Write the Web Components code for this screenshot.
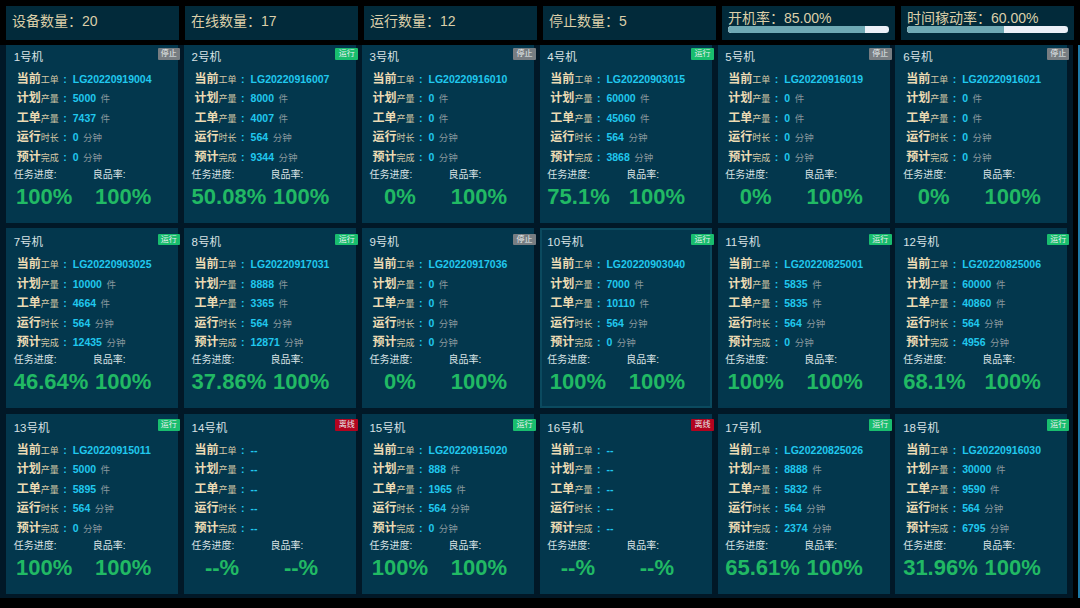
<!DOCTYPE html>
<html lang="zh">
<head>
<meta charset="utf-8">
<style>
  html, body { margin: 0; height: 100%; background: #000; overflow: hidden; }
  body { font-family: "Liberation Sans", "Noto Sans CJK SC", sans-serif; }
</style>
</head>
<body>
<machine-board></machine-board>
<script>
const STATE = { run: ["运行", "#19bd6e"], stop: ["停止", "#777d82"], off: ["离线", "#b3041f"] };

const MACHINES = [
  ["1号机","stop","LG20220919004","5000","7437","0","0","100%"],
  ["2号机","run","LG20220916007","8000","4007","564","9344","50.08%"],
  ["3号机","stop","LG20220916010","0","0","0","0","0%"],
  ["4号机","run","LG20220903015","60000","45060","564","3868","75.1%"],
  ["5号机","stop","LG20220916019","0","0","0","0","0%"],
  ["6号机","stop","LG20220916021","0","0","0","0","0%"],
  ["7号机","run","LG20220903025","10000","4664","564","12435","46.64%"],
  ["8号机","run","LG20220917031","8888","3365","564","12871","37.86%"],
  ["9号机","stop","LG20220917036","0","0","0","0","0%"],
  ["10号机","run","LG20220903040","7000","10110","564","0","100%"],
  ["11号机","run","LG20220825001","5835","5835","564","0","100%"],
  ["12号机","run","LG20220825006","60000","40860","564","4956","68.1%"],
  ["13号机","run","LG20220915011","5000","5895","564","0","100%"],
  ["14号机","off","--","--","--","--","--","--%"],
  ["15号机","run","LG20220915020","888","1965","564","0","100%"],
  ["16号机","off","--","--","--","--","--","--%"],
  ["17号机","run","LG20220825026","8888","5832","564","2374","65.61%"],
  ["18号机","run","LG20220916030","30000","9590","564","6795","31.96%"]
];

class StatBox extends HTMLElement {
  connectedCallback() {
    const pct = this.getAttribute("att-bar");
    this.attachShadow({ mode: "open" }).innerHTML = `
      <style>
        :host { display: flex; flex-direction: column; box-sizing: border-box; height: 34px;
          background: #022a3a; color: #dccfa9; padding: ${pct ? 4 : 7}px 6px 0; font-size: 14px; }
        .t { line-height: 16px; white-space: pre; }
        .track { height: 6.5px; border-radius: 3.25px; background: #ecf0f7; overflow: hidden; }
        .fill { height: 100%; background: #6fa9b4; border-radius: 3.25px 0 0 3.25px; }
      </style>
      <div class="t"><slot></slot></div>
      ${pct ? `<div class="track"><div class="fill" style="width:${pct}%"></div></div>` : ""}`;
  }
}

class InfoRow extends HTMLElement {
  connectedCallback() {
    const val = this.getAttribute("att-val");
    const unit = this.getAttribute("att-unit") || "";
    this.attachShadow({ mode: "open" }).innerHTML = `
      <style>
        :host { display: flex; align-items: baseline; height: 19.5px; line-height: 19.5px; white-space: nowrap; }
        .a { font-size: 12px; font-weight: bold; color: #ecdbb4; }
        .b { font-size: 9px; color: #d5c8a6; }
        .c { font-size: 10.5px; font-weight: bold; color: #20c8ee; margin: 0 6px 0 4.5px; }
        .v { font-size: 10.5px; font-weight: bold; color: #20c8ee; }
        .u { font-size: 9.5px; color: #8a979d; margin-left: 4.5px; }
      </style>
      <span class="a">${this.getAttribute("att-a")}</span><span class="b">${this.getAttribute("att-b")}</span><span class="c">:</span><span class="v">${val}</span>${unit && val !== "--" ? `<span class="u">${unit}</span>` : ""}`;
  }
}

class MachineCard extends HTMLElement {
  connectedCallback() {
    const [name, st, order, plan, done, time, left, pct] = this.data;
    const [label, color] = STATE[st];
    this.attachShadow({ mode: "open" }).innerHTML = `
      <style>
        :host { display: flex; flex-direction: column; justify-content: flex-end; position: relative; box-sizing: border-box;
          background: #03374d; padding: 0 0 10.7px 7.7px; color: #d9e2e4; min-width: 0; }
        :host([att-active]) { outline: 2px solid #0b4a5f; outline-offset: -2px; }
        .name { font-size: 11.5px; line-height: 14px; margin-bottom: 5.7px; }
        .tag { position: absolute; bottom: 163px; right: -2px; width: 22.5px; height: 11.3px; line-height: 11.3px; font-size: 8px;
          text-align: center; color: #e8eeee; background: ${color}; border-radius: 1px; }
        .rows { padding-left: 3px; }
        .heads, .nums { display: grid; grid-template-columns: 79px 1fr; }
        .heads { font-size: 10px; line-height: 12px; margin-top: 1.7px; }
        .nums { font-size: 22px; font-weight: bold; color: #21b964; line-height: 30px; margin-top: 1px; }
        .nums span { width: 61px; text-align: center; white-space: nowrap; }
      </style>
      <div class="name">${name}</div>
      <div class="tag">${label}</div>
      <div class="rows">
        <info-row att-a="当前" att-b="工单" att-val="${order}"></info-row>
        <info-row att-a="计划" att-b="产量" att-val="${plan}" att-unit="件"></info-row>
        <info-row att-a="工单" att-b="产量" att-val="${done}" att-unit="件"></info-row>
        <info-row att-a="运行" att-b="时长" att-val="${time}" att-unit="分钟"></info-row>
        <info-row att-a="预计" att-b="完成" att-val="${left}" att-unit="分钟"></info-row>
      </div>
      <div class="heads"><span>任务进度:</span><span>良品率:</span></div>
      <div class="nums"><span>${pct}</span><span>${pct === "--%" ? "--%" : "100%"}</span></div>`;
  }
}

class MachineBoard extends HTMLElement {
  connectedCallback() {
    const root = this.attachShadow({ mode: "open" });
    root.innerHTML = `
      <style>
        :host { display: flex; flex-direction: column; width: 1080px; height: 608px; background: #000; box-sizing: border-box; }
        .stats { display: grid; grid-template-columns: repeat(6, 173px); column-gap: 6px; padding: 6px 0 5px 6px; }
        .main { display: flex; justify-content: space-between; height: 553px; }
        .wall { width: 1073px; background: #011827; padding-left: 6px; box-sizing: border-box; }
        .grid { display: grid; grid-template-columns: repeat(6, 172px); grid-template-rows: 177.7px 179.7px 180px;
          column-gap: 5.9px; row-gap: 5.6px; }
        .edge { width: 2px; background: #1e7aa8; }
      </style>
      <div class="stats">
        <stat-box>设备数量：20</stat-box>
        <stat-box>在线数量：17</stat-box>
        <stat-box>运行数量：12</stat-box>
        <stat-box>停止数量：5</stat-box>
        <stat-box att-bar="85">开机率：85.00%</stat-box>
        <stat-box att-bar="60">时间稼动率：60.00%</stat-box>
      </div>
      <div class="main"><div class="wall"><div class="grid"></div></div><div class="edge"></div></div>`;
    const grid = root.querySelector(".grid");
    MACHINES.forEach((m, i) => {
      const card = document.createElement("machine-card");
      card.data = m;
      if (i === 9) card.setAttribute("att-active", "");
      grid.appendChild(card);
    });
  }
}

customElements.define("stat-box", StatBox);
customElements.define("info-row", InfoRow);
customElements.define("machine-card", MachineCard);
customElements.define("machine-board", MachineBoard);
</script>
</body>
</html>
